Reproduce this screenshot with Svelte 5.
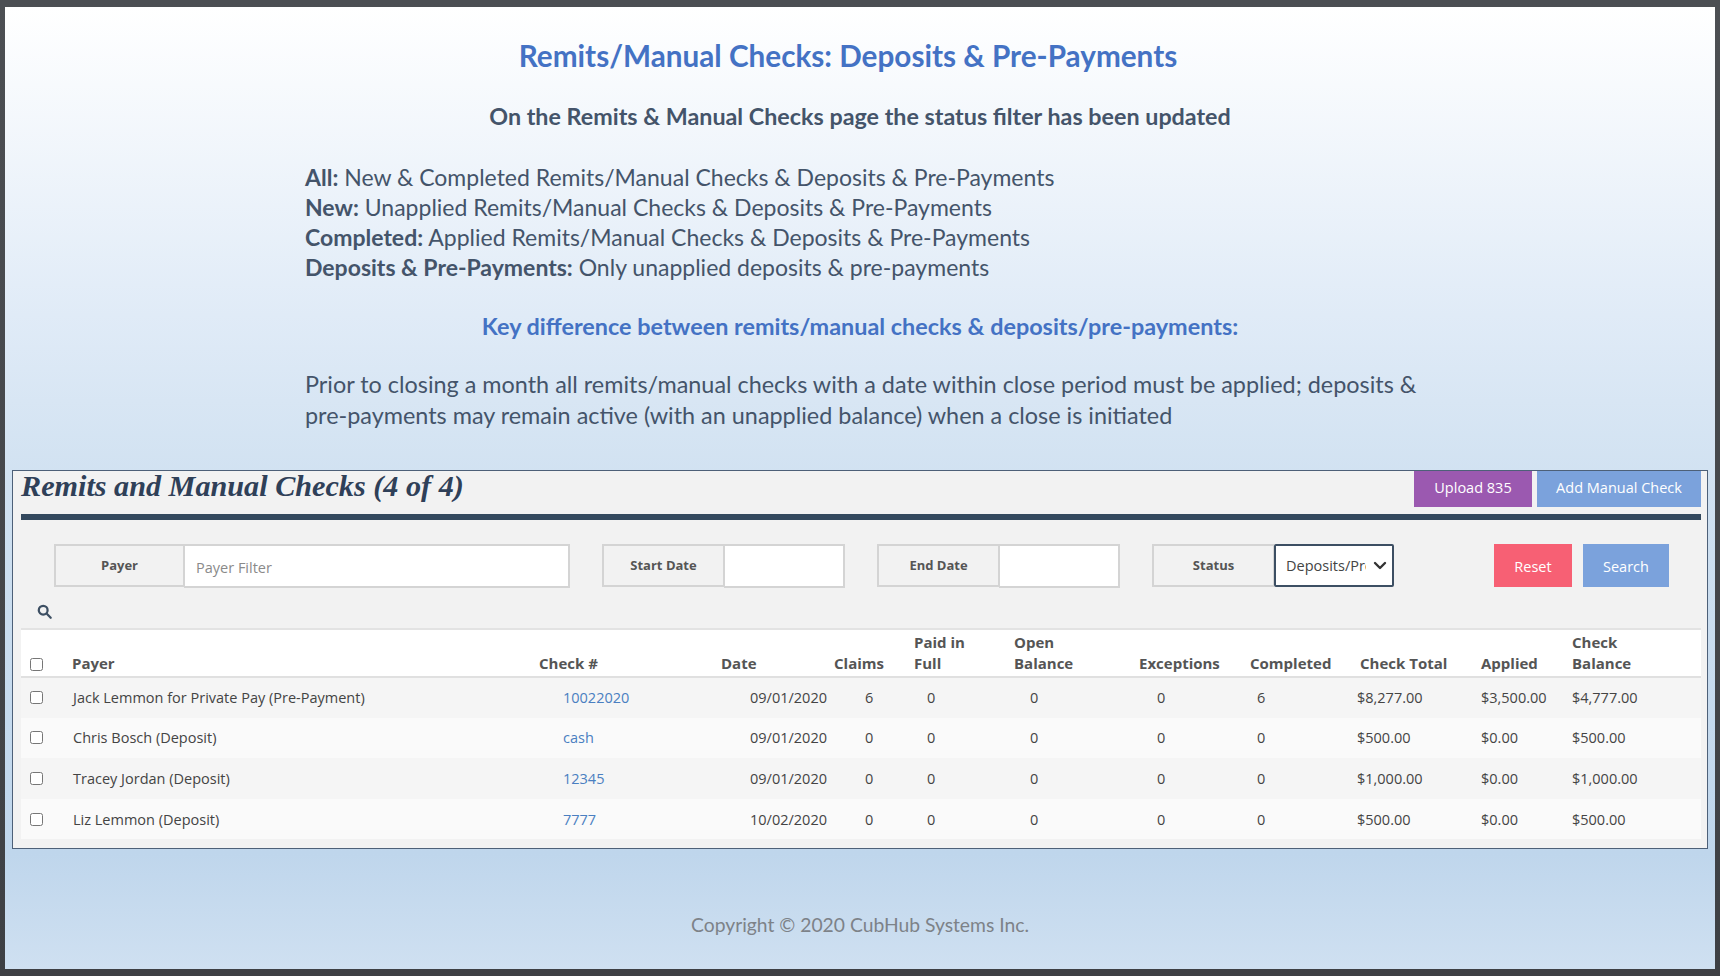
<script>
  const statusLines = [
    ['All:', 'New & Completed Remits/Manual Checks & Deposits & Pre-Payments'],
    ['New:', 'Unapplied Remits/Manual Checks & Deposits & Pre-Payments'],
    ['Completed:', 'Applied Remits/Manual Checks & Deposits & Pre-Payments'],
    ['Deposits & Pre-Payments:', 'Only unapplied deposits & pre-payments']
  ]

  const rows = [
    { payer: 'Jack Lemmon for Private Pay (Pre-Payment)', check: '10022020', date: '09/01/2020', claims: 6, completed: 6, total: '$8,277.00', applied: '$3,500.00', balance: '$4,777.00' },
    { payer: 'Chris Bosch (Deposit)', check: 'cash', date: '09/01/2020', claims: 0, completed: 0, total: '$500.00', applied: '$0.00', balance: '$500.00' },
    { payer: 'Tracey Jordan (Deposit)', check: '12345', date: '09/01/2020', claims: 0, completed: 0, total: '$1,000.00', applied: '$0.00', balance: '$1,000.00' },
    { payer: 'Liz Lemmon (Deposit)', check: '7777', date: '10/02/2020', claims: 0, completed: 0, total: '$500.00', applied: '$0.00', balance: '$500.00' }
  ]
</script>

<div class="slide">
  <h1>Remits/Manual Checks: Deposits &amp; Pre-Payments</h1>
  <h2>On the Remits &amp; Manual Checks page the status filter has been updated</h2>

  <div class="notes">
    {#each statusLines as [label, text]}
      <p><b>{label}</b> {text}</p>
    {/each}
  </div>

  <h3>Key difference between remits/manual checks &amp; deposits/pre-payments:</h3>

  <p class="para">
    Prior to closing a month all remits/manual checks with a date within close period must be applied; deposits &amp;
    pre-payments may remain active (with an unapplied balance) when a close is initiated
  </p>

  <section class="panel">
    <header class="head">
      <div class="head-title">Remits and Manual Checks (4 of 4)</div>
      <div class="head-btns">
        <button class="btn purple">Upload 835</button>
        <button class="btn blue wide">Add Manual Check</button>
      </div>
    </header>

    <div class="filters">
      <div class="field payer">
        <span class="lbl">Payer</span>
        <input placeholder="Payer Filter" />
      </div>
      <div class="field date">
        <span class="lbl">Start Date</span>
        <input />
      </div>
      <div class="field date">
        <span class="lbl">End Date</span>
        <input />
      </div>
      <div class="field date">
        <span class="lbl">Status</span>
        <select>
          <option>Deposits/Pre-Payments</option>
        </select>
      </div>
      <div class="actions">
        <button class="btn red">Reset</button>
        <button class="btn blue">Search</button>
      </div>
    </div>

    <div class="search-row">
      <svg width="15" height="15" viewBox="0 0 16 16" fill="none" stroke="#3d4f63" stroke-width="2.4">
        <circle cx="6.6" cy="6.6" r="4.7" />
        <path d="M10.2 10.2 14.6 14.6" stroke-linecap="round" />
      </svg>
    </div>

    <table>
      <colgroup>
        <col style="width:51px" /><col style="width:467px" /><col style="width:182px" /><col style="width:113px" />
        <col style="width:80px" /><col style="width:100px" /><col style="width:125px" /><col style="width:111px" />
        <col style="width:107px" /><col style="width:124px" /><col style="width:91px" /><col style="width:129px" />
      </colgroup>
      <thead>
        <tr>
          <th><input type="checkbox" /></th>
          <th>Payer</th>
          <th>Check #</th>
          <th>Date</th>
          <th>Claims</th>
          <th>Paid in<br />Full</th>
          <th>Open<br />Balance</th>
          <th>Exceptions</th>
          <th>Completed</th>
          <th>Check Total</th>
          <th>Applied</th>
          <th>Check<br />Balance</th>
        </tr>
      </thead>
      <tbody>
        {#each rows as row}
          <tr>
            <td><input type="checkbox" /></td>
            <td>{row.payer}</td>
            <td><a href="#top">{row.check}</a></td>
            <td>{row.date}</td>
            <td>{row.claims}</td>
            <td>0</td>
            <td>0</td>
            <td>0</td>
            <td>{row.completed}</td>
            <td>{row.total}</td>
            <td>{row.applied}</td>
            <td>{row.balance}</td>
          </tr>
        {/each}
      </tbody>
    </table>
  </section>

  <footer>Copyright © 2020 CubHub Systems Inc.</footer>
</div>

<style>
  :global(body) {
    background: linear-gradient(to bottom, #4c4f53, #3e4044);
    height: 976px;
    overflow: hidden;
  }

  .slide {
    box-sizing: border-box;
    margin: 7px 5px 0 5px;
    height: 962px;
    padding: 0 7px;
    background: linear-gradient(to bottom, #ffffff 0%, #e0ebf7 32%, #d0e1f1 50%, #bfd6ec 88%, #cfe0f1 100%);
    font-family: Lato, sans-serif;
    color: #44546a;
    display: flex;
    flex-direction: column;
  }

  h1 {
    margin: 27px 24px 0 0;
    text-align: center;
    font-size: 29.7px;
    line-height: 44px;
    font-weight: 700;
    color: #4472c4;
  }

  h2 {
    margin: 23px 0 0;
    text-align: center;
    font-size: 23.3px;
    line-height: 30px;
    font-weight: 700;
  }

  .notes {
    margin: 31px 0 0 293px;
    font-size: 23px;
    line-height: 30px;
  }

  .notes p {
    margin: 0;
  }

  h3 {
    margin: 29px 0 0;
    text-align: center;
    font-size: 23.4px;
    line-height: 30px;
    font-weight: 700;
    color: #4472c4;
  }

  .para {
    margin: 28px 0 0 293px;
    width: 1130px;
    font-size: 23.4px;
    line-height: 31px;
  }

  .panel {
    box-sizing: border-box;
    margin-top: 39px;
    height: 379px;
    width: 1696px;
    border: 1px solid #4d6078;
    background: #f2f2f2;
    padding: 0 6px 0 8px;
    font-family: 'Open Sans', sans-serif;
  }

  .head {
    display: flex;
    justify-content: space-between;
    height: 43px;
    border-bottom: 6px solid #34495e;
  }

  .head-title {
    font-family: 'Liberation Serif', serif;
    font-style: italic;
    font-weight: 700;
    font-size: 30.2px;
    line-height: 30px;
    color: #2f4058;
  }

  .head-btns {
    display: flex;
    gap: 5px;
    height: 36px;
  }

  .head-btns .btn {
    padding-bottom: 3px;
  }

  .btn {
    border: 0;
    padding: 0;
    color: #fff;
    font-family: inherit;
    font-size: 14.5px;
  }

  .purple {
    background: #9b59b0;
    width: 118px;
  }

  .blue {
    background: #7ba2dc;
    width: 86px;
  }

  .blue.wide {
    width: 164px;
  }

  .red {
    background: #f76074;
    width: 78px;
  }

  .actions .btn {
    padding-top: 2px;
  }

  .filters {
    display: flex;
    height: 43px;
    margin-top: 24px;
    padding-left: 33px;
  }

  .field {
    display: flex;
    height: 43px;
    margin-right: 32px;
  }

  .lbl {
    box-sizing: border-box;
    width: 122px;
    border: 2px solid #d4d4d4;
    border-right-width: 1px;
    display: flex;
    align-items: center;
    justify-content: center;
    font-size: 13px;
    font-weight: 700;
    color: #555;
    padding-bottom: 1px;
  }

  .payer .lbl {
    width: 130px;
  }

  .field input {
    box-sizing: border-box;
    width: 121px;
    height: 44px;
    border: 2px solid #d4d4d4;
    border-left-width: 1px;
    background: #fff;
    padding: 3px 11px 0;
    font-family: inherit;
    font-size: 14.5px;
    outline: none;
  }

  .payer input {
    width: 386px;
  }

  .payer input::placeholder {
    color: #8a8a8a;
  }

  select {
    box-sizing: border-box;
    width: 120px;
    height: 43px;
    border: 2px solid #3d4f63;
    border-radius: 2px;
    background: #fff url("data:image/svg+xml,%3Csvg xmlns='http://www.w3.org/2000/svg' width='14' height='9' viewBox='0 0 14 9'%3E%3Cpath d='M2 2l5 5 5-5' fill='none' stroke='%23333' stroke-width='2.4' stroke-linecap='round' stroke-linejoin='round'/%3E%3C/svg%3E") no-repeat right 5px center;
    appearance: none;
    color: #444;
    padding: 0 26px 0 10px;
    font-family: inherit;
    font-size: 14.5px;
    outline: none;
  }

  .actions {
    display: flex;
    gap: 11px;
    margin-left: 68px;
  }

  .search-row {
    height: 41px;
    display: flex;
    align-items: center;
    padding: 7px 0 0 16px;
    box-sizing: border-box;
  }

  table {
    width: 1680px;
    table-layout: fixed;
    border-collapse: collapse;
    background: #fff;
    font-size: 14.5px;
    color: #444;
  }

  thead tr {
    height: 48px;
    border-top: 2px solid #e3e3e3;
    border-bottom: 2px solid #e0e0e0;
  }

  th {
    padding: 0 0 2px;
    text-align: left;
    vertical-align: bottom;
    font-size: 15px;
    line-height: 21px;
    font-weight: 700;
    color: #555;
  }

  th:nth-child(10) {
    padding-left: 3px;
  }

  tbody tr {
    height: 40.6px;
    background: #fafafa;
  }

  tbody tr:nth-child(odd) {
    background: #f5f5f5;
  }

  td {
    padding: 0;
  }

  input[type='checkbox'] {
    display: block;
    margin: 0 0 0 9px;
    width: 13px;
    height: 13px;
  }

  th input[type='checkbox'] {
    margin-bottom: 3px;
  }

  td:nth-child(2) {
    padding-left: 1px;
  }

  td:nth-child(3) {
    padding-left: 24px;
  }

  td:nth-child(4) {
    padding-left: 29px;
  }

  td:nth-child(5) {
    padding-left: 31px;
  }

  td:nth-child(6) {
    padding-left: 13px;
  }

  td:nth-child(7) {
    padding-left: 16px;
  }

  td:nth-child(8) {
    padding-left: 18px;
  }

  td:nth-child(9) {
    padding-left: 7px;
  }

  a {
    color: #4a7fc1;
    text-decoration: none;
  }

  footer {
    margin-top: 63px;
    text-align: center;
    font-size: 19.3px;
    line-height: 26px;
    color: #7d8288;
  }
</style>
